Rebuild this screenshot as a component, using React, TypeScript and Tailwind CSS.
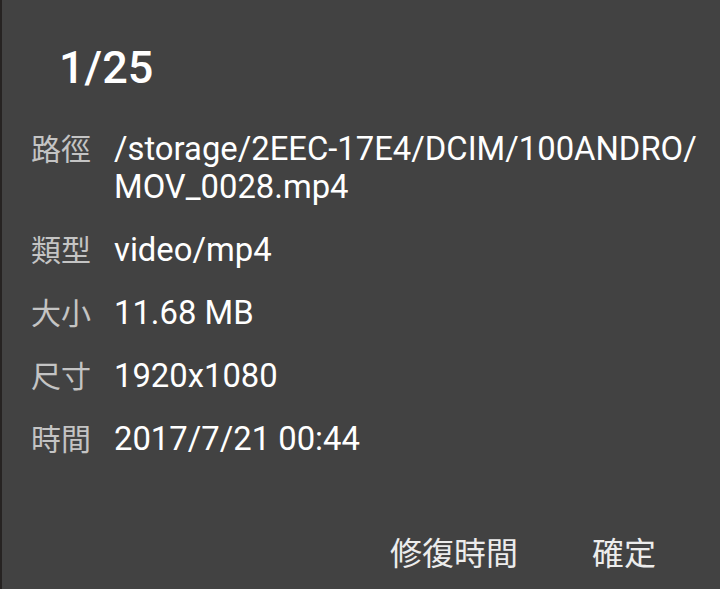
import React from 'react';

const rows: { label: string; value: React.ReactNode }[] = [
  {
    label: '路徑',
    value: (
      <>
        /storage/2EEC-17E4/DCIM/100ANDRO/
        <br />
        MOV_0028.mp4
      </>
    ),
  },
  { label: '類型', value: 'video/mp4' },
  { label: '大小', value: '11.68 MB' },
  { label: '尺寸', value: '1920x1080' },
  { label: '時間', value: '2017/7/21 00:44' },
];

export default function App() {
  return (
    <div className="w-[720px] h-[589px] bg-[#424242] border-l-2 border-[#262322] flex flex-col overflow-hidden">
      {/* dialog title */}
      <div className="pt-[42px] pl-[57px] text-[45px] leading-[52px] font-medium text-white font-['Roboto',sans-serif]">
        1/25
      </div>

      {/* file details */}
      <div className="mt-[36px] pl-[29px] flex flex-col gap-[25px]">
        {rows.map((row) => (
          <div key={row.label} className="flex items-baseline">
            <span className="w-[83px] shrink-0 text-[30px] leading-[34px] text-[#c4c4c4] font-['Noto_Sans_CJK_TC',sans-serif]">
              {row.label}
            </span>
            <span className="whitespace-nowrap text-[32.8px] leading-[38px] text-white font-['Roboto','Noto_Sans_CJK_TC',sans-serif]">
              {row.value}
            </span>
          </div>
        ))}
      </div>

      {/* actions */}
      <div className="mt-[73px] pr-[64px] flex justify-end gap-[74px] text-[32px] leading-[40px] text-[#ececec] font-['Noto_Sans_CJK_TC',sans-serif]">
        <button className="cursor-pointer">修復時間</button>
        <button className="cursor-pointer">確定</button>
      </div>
    </div>
  );
}
